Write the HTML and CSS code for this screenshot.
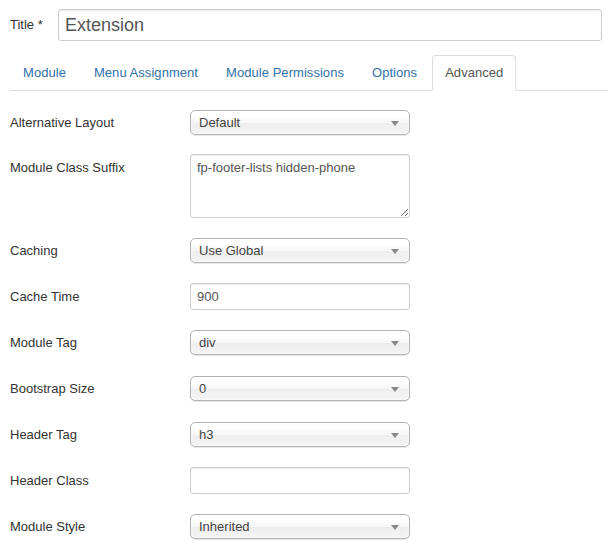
FILE: index.html
```html
<!DOCTYPE html>
<html>
<head>
<meta charset="utf-8">
<link rel="stylesheet" href="styles.css">
</head>
<body>
<div class="page">
  <div class="title-row">
    <label class="title-label">Title *</label>
    <input class="title-input" type="text" value="Extension">
  </div>
  <ul class="tabs">
    <li><a>Module</a></li>
    <li><a>Menu Assignment</a></li>
    <li><a>Module Permissions</a></li>
    <li><a>Options</a></li>
    <li class="active"><a>Advanced</a></li>
  </ul>
  <div class="form">
    <div class="row"><div class="label">Alternative Layout</div><div class="select">Default<span class="arrow"></span></div></div>
    <div class="row row-top"><div class="label">Module Class Suffix</div><textarea class="area">fp-footer-lists hidden-phone</textarea></div>
    <div class="row"><div class="label">Caching</div><div class="select">Use Global<span class="arrow"></span></div></div>
    <div class="row"><div class="label">Cache Time</div><input class="text" type="text" value="900"></div>
    <div class="row"><div class="label">Module Tag</div><div class="select">div<span class="arrow"></span></div></div>
    <div class="row"><div class="label">Bootstrap Size</div><div class="select">0<span class="arrow"></span></div></div>
    <div class="row"><div class="label">Header Tag</div><div class="select">h3<span class="arrow"></span></div></div>
    <div class="row"><div class="label">Header Class</div><input class="text" type="text" value=""></div>
    <div class="row"><div class="label">Module Style</div><div class="select">Inherited<span class="arrow"></span></div></div>
  </div>
</div>
</body>
</html>
```
FILE: styles.css
```css
html, body {
  margin: 0;
  padding: 0;
  background: #fff;
}
body {
  font-family: "Liberation Sans", Arial, sans-serif;
  font-size: 13px;
  line-height: 18px;
  color: #333;
}
.page {
  padding: 9px 0 0 10px;
}
.title-row {
  display: flex;
  align-items: center;
  margin-right: 6px;
}
.title-label {
  width: 48px;
  color: #333;
}
.title-input {
  flex: 1;
  box-sizing: border-box;
  height: 32px;
  margin: 0;
  padding: 4px 6px;
  border: 1px solid #ccc;
  border-radius: 3px;
  box-shadow: inset 0 1px 1px rgba(0,0,0,0.075);
  font-family: "Liberation Sans", Arial, sans-serif;
  font-size: 18px;
  line-height: 22px;
  color: #555;
  outline: none;
}
.tabs {
  list-style: none;
  display: flex;
  margin: 14px 0 17px 0;
  padding: 0;
  border-bottom: 1px solid #ddd;
}
.tabs li {
  margin-bottom: -1px;
}
.tabs a {
  display: block;
  padding: 8px 12px;
  margin-right: 2px;
  line-height: 18px;
  letter-spacing: 0.05px;
  border: 1px solid transparent;
  border-radius: 4px 4px 0 0;
  color: #3071a9;
}
.tabs .active a {
  color: #555;
  background: #fff;
  border-color: #ddd #ddd transparent #ddd;
}
.form {
  display: flex;
  flex-direction: column;
  gap: 18px;
}
.row {
  display: flex;
  align-items: center;
  min-height: 28px;
}
.row-top {
  align-items: flex-start;
}
.label {
  width: 180px;
  padding-top: 1px;
  color: #333;
}
.row-top .label {
  padding-top: 5px;
}
.select {
  position: relative;
  box-sizing: border-box;
  width: 220px;
  height: 25px;
  padding: 0 0 0 8px;
  line-height: 23px;
  border: 1px solid #b4b4b4;
  border-radius: 5px;
  background: linear-gradient(#fff 20%, #f6f6f6 50%, #eee 52%, #f4f4f4 100%);
  box-shadow: inset 0 0 3px #fff, 0 1px 1px rgba(0,0,0,0.1);
  color: #444;
}
.arrow {
  position: absolute;
  right: 10px;
  top: 10px;
  width: 0;
  height: 0;
  border-left: 4px solid transparent;
  border-right: 4px solid transparent;
  border-top: 5px solid #888;
}
.text, .area {
  box-sizing: border-box;
  width: 220px;
  margin: 0;
  padding: 4px 6px;
  border: 1px solid #ccc;
  border-radius: 3px;
  box-shadow: inset 0 1px 1px rgba(0,0,0,0.075);
  font-family: "Liberation Sans", Arial, sans-serif;
  font-size: 13px;
  line-height: 18px;
  color: #555;
  outline: none;
}
.text {
  height: 27px;
}
.area {
  height: 64px;
  resize: both;
}
```
